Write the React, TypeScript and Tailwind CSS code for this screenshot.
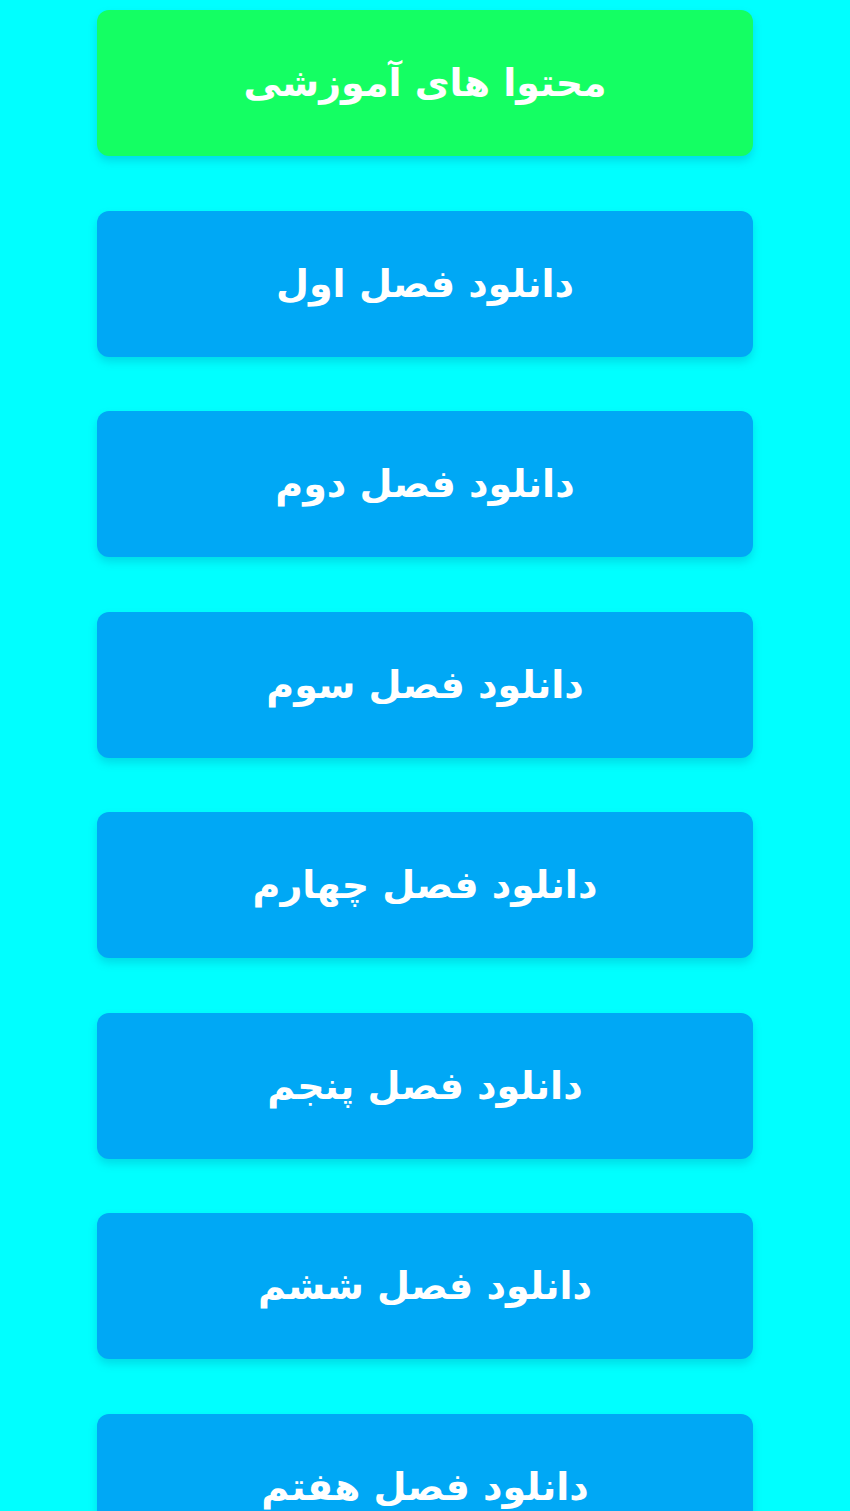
import React from 'react';

const chapters = ['اول', 'دوم', 'سوم', 'چهارم', 'پنجم', 'ششم', 'هفتم'];

const MenuButton: React.FC<{ label: string; green?: boolean }> = ({ label, green }) => (
  <button
    className={`h-[146px] w-full shrink-0 rounded-xl flex items-center justify-center text-white font-bold text-[38px] leading-none shadow-[0_5px_8px_rgba(0,120,160,0.25)] ${
      green ? 'bg-[#14ff63]' : 'bg-[#00a8f5]'
    }`}
    style={{ fontFamily: '"DejaVu Sans", "Noto Sans", sans-serif' }}
  >
    {label}
  </button>
);

export default function App() {
  return (
    <div dir="rtl" className="h-[1511px] overflow-hidden bg-[#00ffff]">
      <div className="flex flex-col gap-[54.5px] pt-[10px] px-[97px]">
        <MenuButton label="محتوا های آموزشی" green />
        {chapters.map(c => (
          <MenuButton key={c} label={`دانلود فصل ${c}`} />
        ))}
      </div>
    </div>
  );
}
